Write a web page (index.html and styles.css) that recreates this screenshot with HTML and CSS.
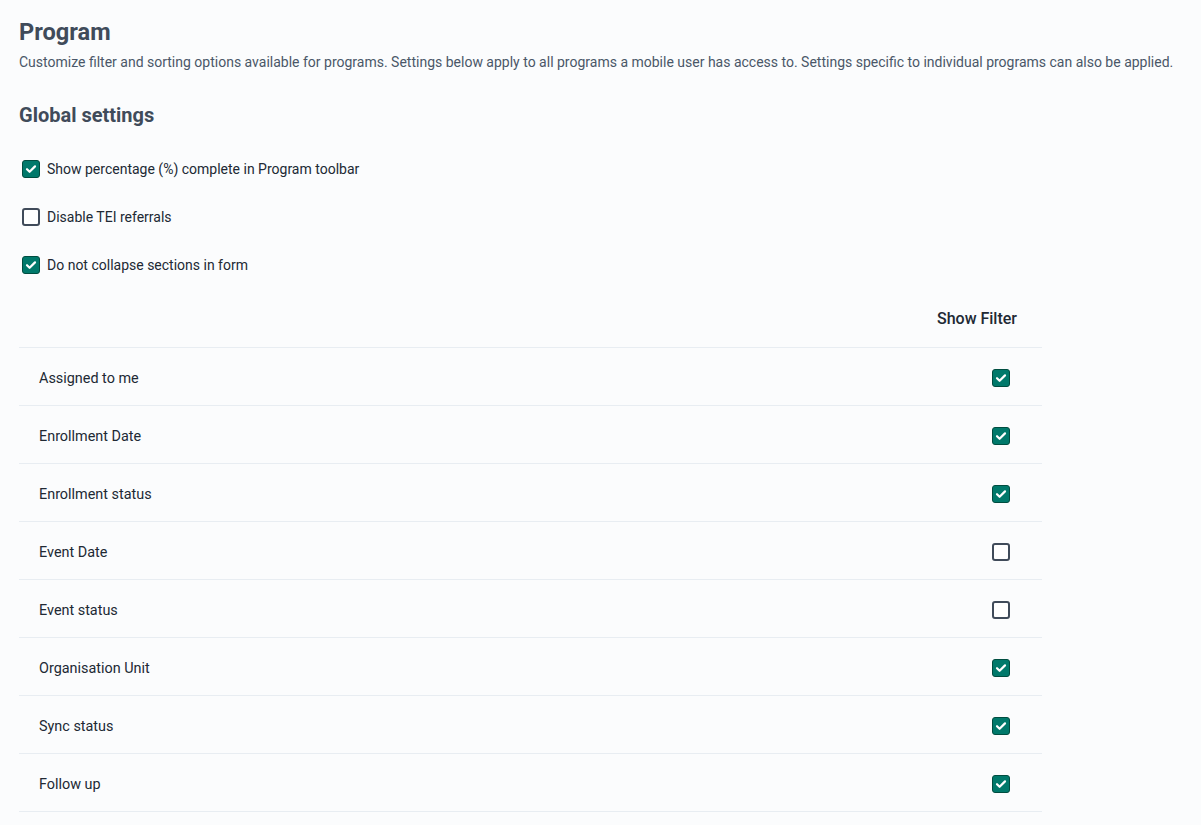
FILE: index.html
```html
<!DOCTYPE html>
<html>
<head>
<meta charset="utf-8">
<link rel="stylesheet" href="styles.css">
</head>
<body>
<main class="page">
  <h1 class="title">Program</h1>
  <p class="desc">Customize filter and sorting options available for programs. Settings below apply to all programs a mobile user has access to. Settings specific to individual programs can also be applied.</p>
  <h2 class="subtitle">Global settings</h2>
  <div class="options">
    <label class="option"><span class="cb checked"><svg viewBox="0 0 18 18"><path d="M5 9.2l2.6 2.6L13 6.4"/></svg></span>Show percentage (%) complete in Program toolbar</label>
    <label class="option"><span class="cb"></span>Disable TEI referrals</label>
    <label class="option"><span class="cb checked"><svg viewBox="0 0 18 18"><path d="M5 9.2l2.6 2.6L13 6.4"/></svg></span>Do not collapse sections in form</label>
  </div>
  <table class="table">
    <thead>
      <tr><th></th><th class="hcol">Show Filter</th></tr>
    </thead>
    <tbody>
      <tr><td class="name">Assigned to me</td><td class="ccol"><span class="cb checked"><svg viewBox="0 0 18 18"><path d="M5 9.2l2.6 2.6L13 6.4"/></svg></span></td></tr>
      <tr><td class="name">Enrollment Date</td><td class="ccol"><span class="cb checked"><svg viewBox="0 0 18 18"><path d="M5 9.2l2.6 2.6L13 6.4"/></svg></span></td></tr>
      <tr><td class="name">Enrollment status</td><td class="ccol"><span class="cb checked"><svg viewBox="0 0 18 18"><path d="M5 9.2l2.6 2.6L13 6.4"/></svg></span></td></tr>
      <tr><td class="name">Event Date</td><td class="ccol"><span class="cb"></span></td></tr>
      <tr><td class="name">Event status</td><td class="ccol"><span class="cb"></span></td></tr>
      <tr><td class="name">Organisation Unit</td><td class="ccol"><span class="cb checked"><svg viewBox="0 0 18 18"><path d="M5 9.2l2.6 2.6L13 6.4"/></svg></span></td></tr>
      <tr><td class="name">Sync status</td><td class="ccol"><span class="cb checked"><svg viewBox="0 0 18 18"><path d="M5 9.2l2.6 2.6L13 6.4"/></svg></span></td></tr>
      <tr><td class="name">Follow up</td><td class="ccol"><span class="cb checked"><svg viewBox="0 0 18 18"><path d="M5 9.2l2.6 2.6L13 6.4"/></svg></span></td></tr>
    </tbody>
  </table>
</main>
</body>
</html>
```
FILE: styles.css
```css
html, body {
  margin: 0;
  padding: 0;
  background: #fbfcfd;
  font-family: Roboto, "Liberation Sans", sans-serif;
  color: #212934;
}
.page {
  padding: 17px 19px 0 19px;
}
.title {
  margin: 0;
  font-size: 23.6px;
  line-height: 30px;
  font-weight: 700;
  color: #404b5a;
}
.desc {
  margin: 5px 0 0 0;
  font-size: 14px;
  line-height: 20px;
  color: #4a5768;
}
.subtitle {
  margin: 31px 0 0 0;
  font-size: 20px;
  line-height: 24px;
  font-weight: 700;
  color: #404b5a;
}
.options {
  display: flex;
  flex-direction: column;
  margin-top: 32px;
  gap: 28px;
}
.option {
  display: flex;
  align-items: center;
  gap: 7px;
  height: 20px;
  padding-left: 3px;
  font-size: 14px;
  color: #212934;
}
.cb {
  box-sizing: border-box;
  width: 18px;
  height: 18px;
  border: 2px solid #404b5a;
  border-radius: 3px;
  background: #fff;
  display: inline-flex;
  align-items: center;
  justify-content: center;
  flex: none;
}
.cb.checked {
  background: #00796b;
  border-color: #004d40;
  border-width: 1px;
}
.cb svg {
  width: 18px;
  height: 18px;
  flex: none;
}
.cb path {
  fill: none;
  stroke: #fff;
  stroke-width: 2.2;
  stroke-linecap: round;
  stroke-linejoin: round;
}
.table {
  width: 1023px;
  margin-top: 32px;
  border-collapse: collapse;
}
.table th {
  height: 40px;
  padding: 2px 0 0 0;
  box-sizing: border-box;
  font-size: 16px;
  line-height: 19px;
  font-weight: 500;
  color: #212934;
  text-align: right;
  border-bottom: 1px solid #e8edf2;
  vertical-align: top;
}
.table th.hcol {
  width: 120px;
  padding-right: 25px;
}
.table td {
  height: 53px;
  border-bottom: 1px solid #e8edf2;
  font-size: 14.4px;
  padding: 4px 0 0 0;
}
.table td.name {
  padding-left: 20px;
}
.table td.ccol {
  text-align: right;
  padding-right: 32px;
}
.table td.ccol .cb {
  vertical-align: middle;
}
```
